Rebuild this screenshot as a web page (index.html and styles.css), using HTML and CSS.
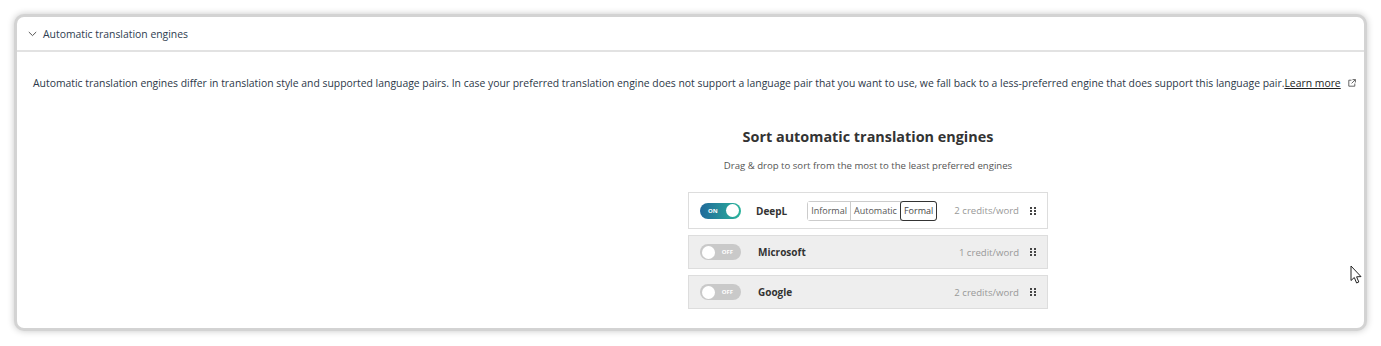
FILE: index.html
```html
<!DOCTYPE html>
<html lang="en">
<head>
    <meta charset="UTF-8">
    <meta name="viewport" content="width=device-width, initial-scale=1.0">
    <title>Automatic translation engines</title>
    <link rel="stylesheet" href="styles.css">
</head>
<body>
    <div class="card">
        <div class="card-header">
            <svg class="chevron" width="9" height="6" viewBox="0 0 9 6"><path d="M0.8 1 L4.5 4.6 L8.2 1" fill="none" stroke="#555" stroke-width="1"/></svg>
            <span>Automatic translation engines</span>
        </div>

        <div class="card-body">
            <p class="description">
                Automatic translation engines differ in translation style and supported language pairs. In case your preferred translation engine does not support a language pair that you want to use, we fall back to a less-preferred engine that does support this language pair.<a href="#" class="learn-more">Learn more</a>
                <svg class="ext-icon" width="8" height="8" viewBox="0 0 8 8"><path d="M3.5 1.2 H0.8 V7.2 H6.8 V4.5" fill="none" stroke="#555" stroke-width="0.9"/><path d="M4.5 0.6 H7.4 V3.5 M7.4 0.6 L3.6 4.4" fill="none" stroke="#555" stroke-width="0.9"/></svg>
            </p>

            <div class="sort-panel">
                <h2>Sort automatic translation engines</h2>
                <p class="hint">Drag &amp; drop to sort from the most to the least preferred engines</p>

                <div class="engine-list">
                    <div class="engine active">
                        <div class="toggle on"><span class="toggle-label">ON</span><span class="knob"></span></div>
                        <span class="engine-name">DeepL</span>
                        <div class="segmented">
                            <button>Informal</button>
                            <button>Automatic</button>
                            <button class="selected">Formal</button>
                        </div>
                        <span class="credits">2 credits/word</span>
                        <span class="handle"><i></i><i></i><i></i><i></i><i></i><i></i></span>
                    </div>
                    <div class="engine">
                        <div class="toggle off"><span class="knob"></span><span class="toggle-label">OFF</span></div>
                        <span class="engine-name">Microsoft</span>
                        <span class="credits">1 credit/word</span>
                        <span class="handle"><i></i><i></i><i></i><i></i><i></i><i></i></span>
                    </div>
                    <div class="engine">
                        <div class="toggle off"><span class="knob"></span><span class="toggle-label">OFF</span></div>
                        <span class="engine-name">Google</span>
                        <span class="credits">2 credits/word</span>
                        <span class="handle"><i></i><i></i><i></i><i></i><i></i><i></i></span>
                    </div>
                </div>
            </div>
        </div>
    </div>

    <!-- mouse pointer captured in the screenshot -->
    <svg class="cursor" width="13" height="20" viewBox="0 0 13 20"><path d="M1 1 V15.5 L4.3 12.5 L6.6 18 L8.8 17 L6.6 11.8 L11 11.6 Z" fill="#fff" stroke="#222" stroke-width="1" stroke-linejoin="round"/></svg>
</body>
</html>
```

FILE: styles.css
```css
body {
    margin: 0;
    padding: 14px;
    background-color: #fff;
    font-family: "Open Sans", "Noto Sans", sans-serif;
    color: #333b47;
}

.card {
    height: 317px;
    box-sizing: border-box;
    border: 3px solid #d3d3d3;
    border-radius: 10px;
    background-color: #fff;
    box-shadow: 0 0 7px rgba(0, 0, 0, 0.22);
    overflow: hidden;
}

.card-header {
    display: flex;
    align-items: center;
    gap: 6px;
    height: 33px;
    padding-left: 11px;
    border-bottom: 2px solid #e2e2e2;
    font-size: 10.4px;
    color: #2e3d50;
}

.card-body {
    padding: 23px 16px 0 16px;
}

.description {
    margin: 0;
    font-size: 10.4px;
    line-height: 16px;
    color: #2c3848;
    white-space: nowrap;
}

.learn-more {
    color: #222;
    text-decoration: underline;
}

.ext-icon {
    margin-left: 5px;
    vertical-align: 0;
}

.sort-panel {
    width: 360px;
    margin: 36px 0 0 655px;
    text-align: center;
}

.sort-panel h2 {
    margin: 0;
    font-size: 14.4px;
    line-height: 20px;
    font-weight: 700;
    color: #333;
}

.hint {
    margin: 12px 0 0 0;
    font-size: 9.6px;
    line-height: 14px;
    color: #555;
}

.engine-list {
    display: flex;
    flex-direction: column;
    gap: 6px;
    margin-top: 19px;
}

.engine {
    display: flex;
    align-items: center;
    height: 34px;
    padding: 0 11px 0 11px;
    box-sizing: border-box;
    background-color: #eee;
    border: 1px solid #ddd;
}

.engine.active {
    height: 37px;
    background-color: #fff;
}

.toggle {
    display: flex;
    align-items: center;
    justify-content: space-between;
    width: 41px;
    height: 16px;
    padding: 0 2px 0 8px;
    box-sizing: border-box;
    border-radius: 8px;
    background: linear-gradient(90deg, #20699a, #2ab39b);
}

.toggle.off {
    padding: 0 8px 0 2px;
    background: #c9c9c9;
}

.toggle-label {
    font-size: 6px;
    font-weight: 700;
    color: #fff;
}

.knob {
    width: 13px;
    height: 13px;
    border-radius: 50%;
    background-color: #fff;
}

.engine-name {
    margin-left: 15px;
    font-size: 10px;
    font-weight: 700;
    color: #333;
}

.toggle.off + .engine-name {
    margin-left: 17px;
}

.segmented {
    display: flex;
    margin-left: 20px;
    border: 1px solid #ccc;
    border-radius: 3px;
}

.segmented button {
    height: 18px;
    padding: 0 3px;
    border: none;
    border-right: 1px solid #ccc;
    background: #fff;
    font-family: inherit;
    font-size: 9px;
    color: #555;
}

.segmented button:last-child {
    border-right: none;
}

.segmented .selected {
    outline: 1px solid #333;
    border-radius: 2px;
    color: #444;
}

.credits {
    margin-left: auto;
    font-size: 9.6px;
    color: #999;
}

.handle {
    display: grid;
    grid-template-columns: 2px 2px;
    gap: 1px 2px;
    margin-left: 11px;
}

.handle i {
    width: 2px;
    height: 2px;
    background-color: #444;
}

.cursor {
    position: absolute;
    left: 1350px;
    top: 265px;
}
```
